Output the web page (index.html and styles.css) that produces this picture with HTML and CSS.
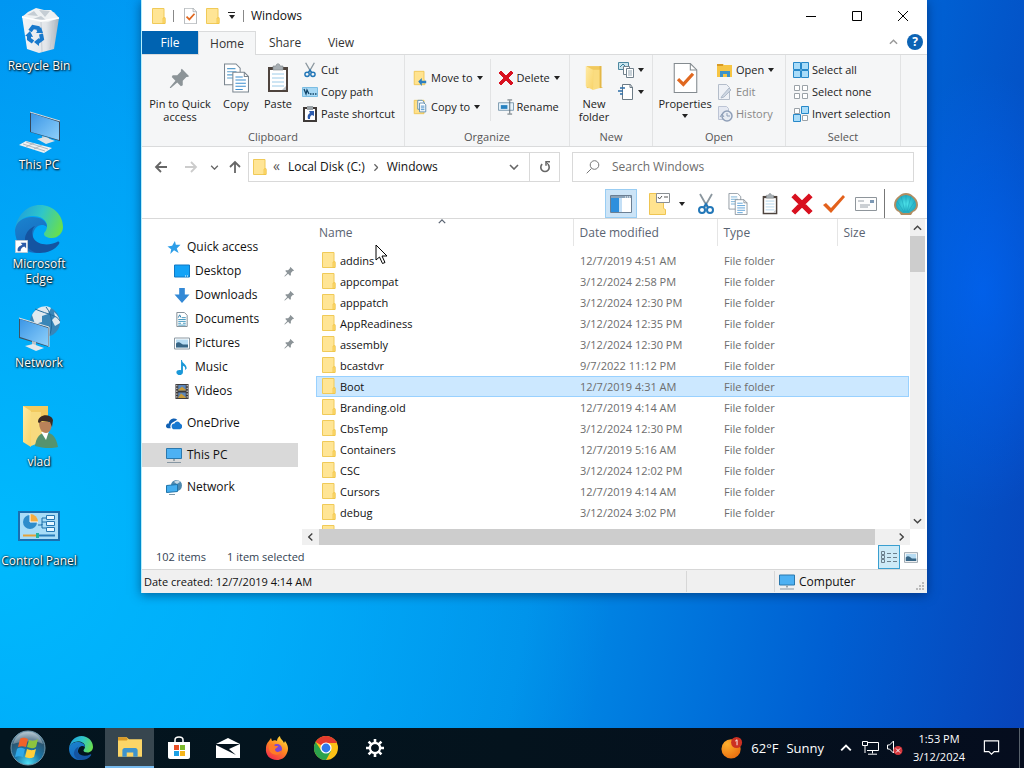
FILE: index.html
```
<!DOCTYPE html>
<html lang="en">
<head>
    <meta charset="UTF-8">
    <meta name="viewport" content="width=device-width, initial-scale=1.0">
    <title>Windows</title>
    <link rel="stylesheet" href="styles.css">
</head>
<body>
    <!-- Icon sprite -->
    <svg class="sprite" aria-hidden="true">
        <defs>
            <linearGradient id="gScreen" x1="0" y1="0" x2="1" y2="1"><stop offset="0" stop-color="#3b96e6"/><stop offset="1" stop-color="#8ed0fb"/></linearGradient>
            <linearGradient id="gFolder" x1="0" y1="0" x2="1" y2="1"><stop offset="0" stop-color="#ffeaa4"/><stop offset="1" stop-color="#f8d469"/></linearGradient>
            <linearGradient id="gBin" x1="0" y1="0" x2="1" y2="0"><stop offset="0" stop-color="#f4f6f8"/><stop offset=".65" stop-color="#e3e6ea"/><stop offset="1" stop-color="#a9b2bb"/></linearGradient>
            <linearGradient id="gEdgeTop" x1="0" y1=".3" x2="1" y2=".6"><stop offset="0" stop-color="#1f9fdc"/><stop offset=".5" stop-color="#2fc6c9"/><stop offset="1" stop-color="#69df4c"/></linearGradient>
            <linearGradient id="gEdgeBody" x1="0" y1="0" x2=".4" y2="1"><stop offset="0" stop-color="#1b84cf"/><stop offset="1" stop-color="#1668bd"/></linearGradient>
            <radialGradient id="gOrb" cx=".5" cy=".95" r=".95"><stop offset="0" stop-color="#4fe0f5"/><stop offset=".4" stop-color="#1a76a8"/><stop offset=".75" stop-color="#2b5570"/><stop offset="1" stop-color="#a5bcc8"/></radialGradient>
            <linearGradient id="gFox" x1=".8" y1="0" x2=".2" y2="1"><stop offset="0" stop-color="#ffe23e"/><stop offset=".45" stop-color="#ff8b1f"/><stop offset="1" stop-color="#f2264f"/></linearGradient>
            <radialGradient id="gSun" cx=".3" cy=".25" r=".9"><stop offset="0" stop-color="#ffb02e"/><stop offset="1" stop-color="#e8680c"/></radialGradient>
            <radialGradient id="gShell" cx=".5" cy=".5" r=".6"><stop offset="0" stop-color="#4fe6ec"/><stop offset="1" stop-color="#1a9fb8"/></radialGradient>
        </defs>

        <symbol id="i-folder" viewBox="0 0 14 16">
            <path d="M.5.500h11.500v9l1 1v5H.5z" fill="#ffe595" stroke="#f0ca58"/>
            <path d="M11 10l2-.5v6h-2z" fill="#ffdc74" stroke="#efc241" stroke-width=".7"/>
        </symbol>
        <symbol id="i-bigfolder" viewBox="0 0 24 28">
            <path d="M4 1h16v24H4z" fill="#f1c95d"/>
            <path d="M18 1h2v23l2 1h-4z" fill="#e3b748"/>
            <path d="M3 1l8 4v22l-8-4z" fill="url(#gFolder)"/>
            <path d="M11 5h7v20l-7 2z" fill="#fadc80"/>
        </symbol>
        <symbol id="i-bin" viewBox="0 0 48 48">
            <path d="M7 9l32-4 5 6-5 31-15 4-12-4z" fill="url(#gBin)"/>
            <path d="M7 10l6-5 8-4 8 2 7 0 8 8-11 4-14 0z" fill="#eef1f3"/>
            <path d="M12 8l7-4 4 5zM24 3l6 7 5-6zM18 12l8-3 5 4z" fill="#c5cdd4"/>
            <path d="M7 10l19 4 18-3" fill="none" stroke="#fff" stroke-width="1.500"/>
            <path d="M26 15l1 30M39 14l-4 28" stroke="#c5ccd3"/>
            <g fill="none" stroke="#1879cc" stroke-width="4"><path d="M15 24l3-4 5 1 1 3"/><path d="M26 27l1 5-4 3"/><path d="M18 35l-4-3 0-4"/></g>
            <path d="M21 26l7 0-2-6zM24 31l-5 4 5 4zM10 29l5-5 3 6z" fill="#1879cc"/>
        </symbol>
        <symbol id="i-pc" viewBox="0 0 48 48">
            <path d="M15 6l30 9v20l-30-9z" fill="#35475a"/>
            <path d="M16 7l28 9v18l-28-8z" fill="url(#gScreen)"/>
            <path d="M15 6l30 9" stroke="#d5dde2"/>
            <path d="M27 30l7 2v4l-7-2z" fill="#b4bec6"/>
            <path d="M22 33l8-2 10 4-9 3z" fill="#dce2e6"/>
            <path d="M4 39l7-4 26 7-8 5z" fill="#eef1f3"/>
            <path d="M8 38l22 7M11 36l22 7M11 41l8-4M19 43l8-4" stroke="#9fabb4" stroke-width=".8"/>
        </symbol>
        <symbol id="i-edge" viewBox="0 0 48 48">
            <path d="M0 25C2 10 12 0 25 0c13 0 23 10 23 22 0 6-5 11-11 11-5 0-8-2-8-4 0-2 3-3 3-8 0-6-6-10-14-10C8 11 2 17 0 25z" fill="url(#gEdgeTop)"/>
            <path d="M0 25c1-8 8-13 17-13 9 0 15 4 15 10-6-5-14 0-14 9 0 7 6 12 13 12-2 3-6 5-11 5C8 47 0 38 0 25z" fill="url(#gEdgeBody)"/>
            <path d="M20 21c-3 3-4 8-1 13 4 6 15 7 23 3 2-1 3 0 2 2-4 6-12 9-19 9-9 0-16-7-15-15 1-6 5-10 10-12z" fill="#1454a1"/>
        </symbol>
        <symbol id="i-shortcut" viewBox="0 0 14 14">
            <path d="M.5.5h13v13H.5z" fill="#fff" stroke="#bcc8d4"/>
            <path d="M6 3h6v6l-2-2c-3 1-4 3-4 5H3c-1-4 2-6 5-7z" fill="#2c5ba8"/>
        </symbol>
        <symbol id="i-net" viewBox="0 0 48 48">
            <circle cx="30" cy="18" r="15" fill="#3886b8"/>
            <path d="M17 11c4-8 14-11 19-7l-3 6-6 2 0 6-7 2zM39 8c4 3 6 7 6 11l-5 3-3-6 3-3z" fill="#dfe9ef"/>
            <path d="M31 3c7 8 7 22 3 29M20 5c14 6 22 6 25 12" fill="none" stroke="#236a9b"/>
            <path d="M4 14l30 9v20L4 34z" fill="#3c5366"/>
            <path d="M5 15l28 9v18L5 33z" fill="url(#gScreen)"/>
            <path d="M4 14l30 9v20" fill="none" stroke="#dbe5eb"/>
            <path d="M17 37l4 1v4l-4-1z" fill="#b8c3ca"/>
            <path d="M10 42l8-2 11 4-8 3z" fill="#e3e8eb"/>
        </symbol>
        <symbol id="i-user" viewBox="0 0 48 48">
            <path d="M8 3h25v34H8z" fill="#f2ca5f"/>
            <path d="M8 3l8 5v36l-8-5z" fill="url(#gFolder)"/>
            <path d="M16 9h10v30l-10 4z" fill="#f8da7e"/>
            <path d="M20 43c1-8 4-12 9-13 7-1 12 3 14 14-7 2-16 1-23-1z" fill="#55936f"/>
            <path d="M26 29l8-1-3 9z" fill="#fff"/>
            <path d="M24 19c0 7 3 11 7 11s6-5 6-11z" fill="#b98259"/>
            <path d="M23 19c0-8 13-9 15-2l-1 7-2-5-8-1-3 2z" fill="#3b2a23"/>
        </symbol>
        <symbol id="i-cpl" viewBox="0 0 48 48">
            <path d="M3 9h42v30H3z" fill="#1a6fb0"/>
            <path d="M5 11h38v26H5z" fill="#a8dcf8"/>
            <circle cx="15" cy="20" r="7" fill="#2e8ccb"/>
            <path d="M15 20v-8a8 8 0 018 8z" fill="#f6ac3f"/>
            <path d="M15 20v-8M15 20h8" stroke="#fff"/>
            <path d="M23 23h4v-7h4M31 20h-4M31 26h-4v-4" fill="none" stroke="#1f6ea8"/>
            <path d="M31.500 13.500h8v4h-8zM31.500 19.500h8v4h-8zM31.500 25.500h8v4h-8z" fill="#e9f7ff" stroke="#2577b3"/>
            <path d="M8 33.500h15" stroke="#e4a23a" stroke-width="2"/>
            <path d="M23 33.500h17" stroke="#2a7dbb" stroke-width="2"/>
            <path d="M21 31h3v5h-3z" fill="#24b1a0"/>
        </symbol>

        <symbol id="i-pin" viewBox="0 0 24 24">
            <path d="M14 2l8 8-2 1-1 0-4 4 0 5-2 1-4-4-7 6-1 0 0-1 6-7-4-4 1-2 5 0 4-4 0-2z" fill="#8c9498"/>
        </symbol>
        <symbol id="i-copy" viewBox="0 0 24 28">
            <path d="M.5.500h11l4 4v16h-15z" fill="#fff" stroke="#7b8690"/>
            <path d="M3 5h8M3 8h9M3 11h9M3 14h9" stroke="#5a9fce"/>
            <path d="M8.500 8.500h11l4 4v15h-15z" fill="#fff" stroke="#7b8690"/>
            <path d="M19.500 8.500v4h4" fill="none" stroke="#7b8690"/>
            <path d="M11 13h7M11 16h10M11 19h10M11 22h10M11 25h7" stroke="#3d8fd0"/>
        </symbol>
        <symbol id="i-paste" viewBox="0 0 22 30">
            <path d="M1 4h20v25H1z" fill="#4e443e"/>
            <path d="M3 7h16v20H3z" fill="#fff"/>
            <path d="M5 11h12M5 15h12M5 19h12M5 23h12" stroke="#9ccbe8"/>
            <path d="M6 3h3c0-3 4-3 4 0h3v4H6z" fill="#a7aeb3" stroke="#7f878c" stroke-width=".6"/>
            <path d="M15 27l4-4v4z" fill="#bfc4c8"/>
        </symbol>
        <symbol id="i-cut" viewBox="0 0 16 22">
            <path d="M2 1l8 14M14 1L6 15" stroke="#8b979f" stroke-width="1.800"/>
            <circle cx="4" cy="17" r="3" fill="none" stroke="#2277b8" stroke-width="2"/>
            <circle cx="12" cy="17" r="3" fill="none" stroke="#2277b8" stroke-width="2"/>
            <path d="M6 14l2-3 2 3" fill="none" stroke="#2277b8" stroke-width="2"/>
        </symbol>
        <symbol id="i-path" viewBox="0 0 16 10">
            <path d="M.5.500h15v9H.5z" fill="#a6d8f5" stroke="#7bbde3"/>
            <path d="M2 2l2 5 1-4 2 4" fill="none" stroke="#124468" stroke-width="1.300"/>
            <path d="M8 7h1.500M10.500 7H12M13 7h1.500" stroke="#124468" stroke-width="1.500"/>
        </symbol>
        <symbol id="i-pasteshort" viewBox="0 0 14 16">
            <path d="M1 2h12v13H1z" fill="#fff" stroke="#3f3a38" stroke-width="2"/>
            <path d="M4 0h6v4H4z" fill="#9ba3a8"/>
            <path d="M6 5h5v5l-2-1c-2 1-2 2-2 4H5c-1-3 0-5 2-6z" fill="#2d5cae"/>
        </symbol>
        <symbol id="i-moveto" viewBox="0 0 16 18">
            <path d="M1.500 1.500h11v9l1 1v5h-12z" fill="#ffe38f" stroke="#efc552"/>
            <path d="M6 13l4-4v3h5v3h-5v3z" fill="#2c7fc2"/>
        </symbol>
        <symbol id="i-copyto" viewBox="0 0 16 18">
            <path d="M1.500 1.500h11v15h-11z" fill="#ffe08a" stroke="#efc552"/>
            <path d="M5.500 1.500h5l2 2v8h-7z" fill="#fff" stroke="#5688b0"/>
            <path d="M7.500 4.500h5l2 2v8h-7z" fill="#fff" stroke="#5688b0"/>
            <path d="M9 8h4M9 10h4M9 12h4" stroke="#3a86c6"/>
        </symbol>
        <symbol id="i-x" viewBox="0 0 16 16">
            <path d="M1 3l2-2 5 5 5-5 2 2-5 5 5 5-2 2-5-5-5 5-2-2 5-5z" fill="#d8101f" stroke="#d8101f"/>
        </symbol>
        <symbol id="i-rename" viewBox="0 0 17 16">
            <path d="M.5 3.500h16v8H.5z" fill="#e4f2fb" stroke="#7c99ad"/>
            <path d="M3 6h7v4H3z" fill="#2681c0"/>
            <path d="M12.500 1v14M10 .500h5M10 15.500h5" stroke="#58646c"/>
        </symbol>
        <symbol id="i-newitem" viewBox="0 0 16 16">
            <path d="M.5.500h10v7H.5z" fill="#cbe5ee" stroke="#4d88a0"/>
            <path d="M2 5l3-3 4 4" fill="none" stroke="#38819d"/>
            <path d="M5.500 4.500h6v8h-6z" fill="#fff" stroke="#71818c"/>
            <path d="M8.500 6.500h7v9h-7z" fill="#fff" stroke="#71818c"/>
            <path d="M10 9h4M10 11h4M10 13h4" stroke="#91a4b1"/>
        </symbol>
        <symbol id="i-easy" viewBox="0 0 16 16">
            <path d="M4.500.500h8l2 3v12h-10z" fill="#fff" stroke="#6c7b86"/>
            <path d="M12 .500v3h3" fill="none" stroke="#6c7b86"/>
            <path d="M2 4h5M0 7h5M2 10h3" stroke="#2c6da8" stroke-width="1.500"/>
        </symbol>
        <symbol id="i-props" viewBox="0 0 22 28">
            <path d="M.5.500h15l6 6v21H.5z" fill="#fff" stroke="#848b90"/>
            <path d="M15.500.500v6h6" fill="none" stroke="#848b90"/>
            <path d="M4 15l5 5 9-10" fill="none" stroke="#e06820" stroke-width="3"/>
        </symbol>
        <symbol id="i-open" viewBox="0 0 16 14">
            <path d="M0 1h6l1 1h8v12H0z" fill="#f6c544"/>
            <path d="M0 1h6v2H0z" fill="#d89a25"/>
            <path d="M3 14V8h10v6h-3v-3H6v3z" fill="#3c92c8"/>
        </symbol>
        <symbol id="i-edit" viewBox="0 0 16 16">
            <path d="M1.500.500h8l3 3v12h-11z" fill="#eef1f6" stroke="#b4bdca"/>
            <path d="M5 12l7-8 2 2-7 7-3 1z" fill="#cdd6e2" stroke="#a3b0c0" stroke-width=".8"/>
        </symbol>
        <symbol id="i-history" viewBox="0 0 16 16">
            <path d="M1.500.500h8l2 2v11h-10z" fill="#e5e9f2" stroke="#bcc4d5"/>
            <circle cx="10" cy="10" r="5" fill="#e8ecf3" stroke="#8f9fb8" stroke-width="1.500"/>
            <path d="M10 7v3h3M3 11l2-3 2 3" fill="none" stroke="#8f9fb8"/>
        </symbol>
        <symbol id="i-selall" viewBox="0 0 16 16">
            <path d="M.5.500h7v7h-7zM8.500.500h7v7h-7zM.5 8.500h7v7h-7zM8.500 8.500h7v7h-7z" fill="#a9dcf9" stroke="#2788c9"/>
        </symbol>
        <symbol id="i-selnone" viewBox="0 0 16 16">
            <path d="M1.500 1.500h5v5h-5zM9.500 1.500h5v5h-5zM1.500 9.500h5v5h-5zM9.500 9.500h5v5h-5z" fill="#fff" stroke="#9ba2a8"/>
        </symbol>
        <symbol id="i-selinv" viewBox="0 0 16 16">
            <path d="M1.500 2.500h5v5h-5zM9.500 9.500h5v5h-5z" fill="#fff" stroke="#9ba2a8"/>
            <path d="M8.500.500h7v7h-7zM.5 8.500h7v7h-7z" fill="#a9dcf9" stroke="#2788c9"/>
        </symbol>

        <symbol id="i-arrow" viewBox="0 0 14 12">
            <path d="M13 6H2M7 1L2 6l5 5" fill="none" stroke="currentColor" stroke-width="1.800"/>
        </symbol>
        <symbol id="i-arrowup" viewBox="0 0 12 14">
            <path d="M6 13V2M1 7l5-5 5 5" fill="none" stroke="currentColor" stroke-width="1.800"/>
        </symbol>
        <symbol id="i-chev" viewBox="0 0 10 6">
            <path d="M1 1l4 4 4-4" fill="none" stroke="currentColor" stroke-width="1.600"/>
        </symbol>
        <symbol id="i-refresh" viewBox="0 0 12 12">
            <path d="M3.200 3.200a4.200 4.200 0 105.600 0" fill="none" stroke="currentColor" stroke-width="1.600"/>
            <path d="M11 .8H7v4" fill="none" stroke="currentColor" stroke-width="1.500"/>
            <path d="M7 1l3 3" stroke="currentColor"/>
        </symbol>
        <symbol id="i-search" viewBox="0 0 14 14">
            <circle cx="8.500" cy="5" r="4.300" fill="none" stroke="currentColor"/>
            <path d="M5.500 8.500L.7 13.300" stroke="currentColor"/>
        </symbol>

        <symbol id="i-pane" viewBox="0 0 22 18">
            <path d="M.5.500h21v17H.5z" fill="#fff" stroke="#6c7f93"/>
            <path d="M1 1h20v2H1z" fill="#8aa2b8"/>
            <path d="M1 3h8v14H1z" fill="#2e8fdd"/>
            <path d="M9 3h3v14H9z" fill="#c3dff6"/>
            <path d="M15 2h1M17 2h1M19 2h1" stroke="#fff"/>
        </symbol>
        <symbol id="i-folderview" viewBox="0 0 22 22">
            <path d="M1.500.500h14v15l2 1v5h-16z" fill="#ffe38f" stroke="#efc552"/>
            <path d="M8.500.500h13v9h-13z" fill="#fff" stroke="#8a8f93"/>
            <path d="M10 4l1.500 2L14 3M16 4h4" fill="none" stroke="#555"/>
        </symbol>
        <symbol id="i-check" viewBox="0 0 22 18">
            <path d="M0 10l3-2 5 5L20 0l2 2L8 18z" fill="#e3611c"/>
        </symbol>
        <symbol id="i-mail2" viewBox="0 0 22 14">
            <path d="M.5.500h21v13H.5z" fill="#fdfdfd" stroke="#8e959b"/>
            <path d="M15 3h4v3h-4z" fill="#7d99b5"/>
            <path d="M3 4h6M5 8h10M5 10h8" stroke="#9aa2aa"/>
        </symbol>
        <symbol id="i-shell" viewBox="0 0 24 22">
            <path d="M12 0c3 0 5 1 7 3 3 2 5 5 5 9 0 3-2 6-5 7l-2 3H7l-2-3c-3-1-5-4-5-7 0-4 2-7 5-9 2-2 4-3 7-3z" fill="#b08d62"/>
            <path d="M12 2c4 0 10 4 10 10 0 3-2 5-4 6l-3 2H9l-3-2c-2-1-4-3-4-6C2 6 8 2 12 2z" fill="url(#gShell)"/>
            <path d="M12 19V2M11 19L7 3M13 19l4-16M10 19L3 8M14 19l7-11" stroke="#1b9db4" stroke-width=".5"/>
        </symbol>

        <symbol id="i-star" viewBox="0 0 14 14">
            <path d="M8 0l1 4 5 0-4 4 2 5-5-3-4 4 1-5-4-3 5-1z" fill="#2d9ee8"/>
        </symbol>
        <symbol id="i-desktop" viewBox="0 0 16 14">
            <path d="M.5.500h15v12H.5z" fill="#14a3f7" stroke="#1079c4"/>
            <path d="M11 11.500h1M13 11.500h1" stroke="#fff"/>
        </symbol>
        <symbol id="i-down" viewBox="0 0 16 16">
            <path d="M5 0h6v7h5l-8 9-8-9h5z" fill="#3389d6"/>
        </symbol>
        <symbol id="i-doc" viewBox="0 0 12 16">
            <path d="M.5.500h8l3 3v12H.5z" fill="#fff" stroke="#7d8992"/>
            <path d="M2 8h8M2 10h8M2 12h3M7 12h3M2 14h8M6 6h4" stroke="#3f94bd"/>
            <path d="M2 6l1.500-3L5 6" fill="none" stroke="#2c79a8"/>
        </symbol>
        <symbol id="i-pics" viewBox="0 0 16 12">
            <path d="M.5.500h15v11H.5z" fill="#fff" stroke="#8b98a2"/>
            <path d="M2 2h12v8H2z" fill="#b7dcf3"/>
            <path d="M2 6c3-3 5 0 7 1l5 0v3H2z" fill="#386686"/>
        </symbol>
        <symbol id="i-music" viewBox="0 0 12 16">
            <path d="M6 0c0 4 5 4 5 9l-2 2c1-3 0-4-2-5v7c0 4-7 4-7 0 0-2 3-3 5-2V0z" fill="#1a98d8"/>
        </symbol>
        <symbol id="i-video" viewBox="0 0 14 16">
            <path d="M0 0h14v16H0z" fill="#3d3a3a"/>
            <path d="M3 1h8v6H3zM3 9h8v6H3z" fill="#5c86b9"/>
            <path d="M3 6l4-3 4 3v1H3zM3 14l3-4 5 4v1H3z" fill="#c99b38"/>
            <path d="M1.500 1v15M12.500 1v15" stroke="#fff" stroke-dasharray="1.500 1.500"/>
        </symbol>
        <symbol id="i-onedrive" viewBox="0 0 17 12">
            <path d="M0 9c0-3 2-3 3-3 0-4 5-7 9-4L7 5c-2 1-3 4-2 6H2c-1 0-2-1-2-2z" fill="#1161b4"/>
            <path d="M6 9c0-2 1-3 3-3 1-3 5-3 6 0 3 1 3 5 0 6H8c-1 0-2-1-2-3z" fill="#1878d0"/>
        </symbol>
        <symbol id="i-monitor" viewBox="0 0 16 15">
            <path d="M.5.500h15v10H.5z" fill="#4db1f3" stroke="#2b78ad"/>
            <path d="M7 11h2v2H7z" fill="#98a4ac"/>
            <path d="M1 14.500h14" stroke="#8797a3"/>
        </symbol>
        <symbol id="i-smallnet" viewBox="0 0 16 15">
            <circle cx="10.500" cy="5.500" r="5.500" fill="#4d88ae"/>
            <path d="M8 2c2-2 5-2 6 0l-3 2z" fill="#c7dae6"/>
            <path d="M.5 5.500l11-1v7l-11 1z" fill="#43aef0" stroke="#1e74aa"/>
            <path d="M3 14.500h6" stroke="#7d98aa"/>
        </symbol>

        <symbol id="i-orb" viewBox="0 0 36 36">
            <circle cx="18" cy="18" r="17" fill="url(#gOrb)" stroke="#6f98ad"/>
            <path d="M3 14C6 5 12 2 18 2s12 3 15 12c-8-4-20-3-30 0z" fill="#fff" opacity=".3"/>
            <path d="M10 9c3-2 5-1 8 0l-2 8c-3-1-5-1-8 0z" fill="#f0622a"/>
            <path d="M19 10c3 1 6 1 9-1l-2 8c-3 2-6 1-9 0z" fill="#8cc43f"/>
            <path d="M7 19c3-2 5-1 8 0l-2 8c-3-1-5-1-8 0z" fill="#2fa8e8"/>
            <path d="M17 19c3 1 5 2 9 0l-2 8c-4 2-6 1-9 0z" fill="#ffcf3b"/>
        </symbol>
        <symbol id="i-explorer" viewBox="0 0 22 18">
            <path d="M0 0h8l2 2h12v16H0z" fill="#fbd567"/>
            <path d="M0 0h8l1 2-1 1H0z" fill="#d99a27"/>
            <path d="M4 18v-6c0-1 1-2 2-2h10c1 0 2 1 2 2v6h-4v-4H8v4z" fill="#3d93cd"/>
        </symbol>
        <symbol id="i-store" viewBox="0 0 24 24">
            <path d="M8 7V4c0-4 8-4 8 0v3" fill="none" stroke="#fff" stroke-width="1.500"/>
            <path d="M1 6h22v15c0 1-1 2-2 2H3c-1 0-2-1-2-2z" fill="#fff"/>
            <path d="M7 9h5v5H7z" fill="#e94f26"/><path d="M13 9h5v5h-5z" fill="#7cb92c"/>
            <path d="M7 15h5v5H7z" fill="#1ba0e4"/><path d="M13 15h5v5h-5z" fill="#f6b51a"/>
        </symbol>
        <symbol id="i-mail" viewBox="0 0 24 20">
            <path d="M0 6l12-6 12 6v14H0z" fill="#fff"/>
            <path d="M0 6h24l-11 5 7 6L0 7z" fill="#04131d"/>
        </symbol>
        <symbol id="i-firefox" viewBox="0 0 24 24">
            <path d="M4 5l2-3 1 3c2-1 4-1 5 0 0-2 1-4 3-5 0 3 3 4 4 7l1-2c3 4 4 8 2 12-2 5-6 7-10 7C5 24 0 19 1 12c0-3 1-5 3-7z" fill="url(#gFox)"/>
            <circle cx="12" cy="13" r="5" fill="#7c46d4"/>
            <path d="M4 9c2-2 5-1 6 1l3 0c0 2-3 2-3 4 1 3 5 2 7 0-1 4-5 6-9 4-3-1-5-5-4-9z" fill="#ff7b26"/>
        </symbol>
        <symbol id="i-chrome" viewBox="0 0 24 24">
            <circle cx="12" cy="12" r="12" fill="#fbc116"/>
            <path d="M12 12L1.600 6A12 12 0 0122.400 6L12 7z" fill="#e33b2e"/>
            <path d="M1.600 6A12 12 0 0012 24l5-9-5-3-5 2z" fill="#2ba24c"/>
            <path d="M12 6h10.400" stroke="#e33b2e" stroke-width="2"/>
            <circle cx="12" cy="12" r="5.600" fill="#fff"/><circle cx="12" cy="12" r="4.400" fill="#2f79ea"/>
        </symbol>
        <symbol id="i-gear" viewBox="0 0 18 18">
            <circle cx="9" cy="9" r="5" fill="none" stroke="#fff" stroke-width="2.400"/>
            <path d="M9 0v4M9 14v4M0 9h4M14 9h4M2.600 2.600l3 3M12.400 12.400l3 3M15.400 2.600l-3 3M5.600 12.400l-3 3" stroke="#fff" stroke-width="2.600"/>
            <circle cx="9" cy="9" r="3.600" fill="#04131d"/>
        </symbol>
        <symbol id="i-sun" viewBox="0 0 24 24">
            <circle cx="11" cy="13" r="10.500" fill="url(#gSun)"/>
            <circle cx="17" cy="6" r="6" fill="#cb3123"/>
            <path d="M15.500 4.500L17.500 3v6" fill="none" stroke="#fff"/>
        </symbol>
        <symbol id="i-lan" viewBox="0 0 17 14">
            <path d="M5 1.500h11.500v8H5M10.500 9.500v3M6 13.200h9M.5.500h5v4h-5zM3 5v7" fill="none" stroke="#fff"/>
        </symbol>
        <symbol id="i-vol" viewBox="0 0 16 16">
            <path d="M1 5h2l4-4v12L3 9H1z" fill="none" stroke="#fff"/>
            <circle cx="11.500" cy="10.500" r="4.500" fill="#d5363c"/>
            <path d="M9.500 8.500l4 4M13.500 8.500l-4 4" stroke="#fff"/>
        </symbol>
        <symbol id="i-note" viewBox="0 0 18 18">
            <path d="M1 1h16v12h-5l-3 3-3-3H1z" fill="none" stroke="#fff" stroke-width="1.300"/>
        </symbol>
    </svg>

    <main class="desktop">
        <nav class="shortcuts" aria-label="Desktop">
            <a href="#"><svg><use href="#i-bin"/></svg>Recycle Bin</a>
            <a href="#"><svg><use href="#i-pc"/></svg>This PC</a>
            <a href="#" class="has-badge"><svg><use href="#i-edge"/></svg>Microsoft<br>Edge<svg class="badge"><use href="#i-shortcut"/></svg></a>
            <a href="#"><svg><use href="#i-net"/></svg>Network</a>
            <a href="#"><svg><use href="#i-user"/></svg>vlad</a>
            <a href="#"><svg><use href="#i-cpl"/></svg>Control Panel</a>
        </nav>

        <section class="window">
            <header class="titlebar">
                <svg class="ic-folder"><use href="#i-folder"/></svg>
                <span class="bar"></span>
                <svg class="ic-props"><use href="#i-props"/></svg>
                <svg class="ic-folder"><use href="#i-folder"/></svg>
                <button class="qat" aria-label="Customize"><span class="caret"></span></button>
                <span class="bar"></span>
                <h1>Windows</h1>
                <div class="winbtns">
                    <button aria-label="Minimize"><svg viewBox="0 0 10 10"><path d="M0 5.500h10"/></svg></button>
                    <button aria-label="Maximize"><svg viewBox="0 0 10 10"><path d="M.5.500h9v9h-9z"/></svg></button>
                    <button aria-label="Close"><svg viewBox="0 0 10 10"><path d="M0 0l10 10M10 0L0 10"/></svg></button>
                </div>
            </header>

            <div class="tabs">
                <button class="tab file">File</button>
                <button class="tab active">Home</button>
                <button class="tab">Share</button>
                <button class="tab">View</button>
                <button class="collapse" aria-label="Collapse ribbon"><svg><use href="#i-chev"/></svg></button>
                <button class="help" aria-label="Help">?</button>
            </div>

            <div class="ribbon">
                <div class="group clipboard">
                    <div class="tools">
                        <button class="big wide"><svg class="ic-pin"><use href="#i-pin"/></svg>Pin to Quick<br>access</button>
                        <button class="big"><svg class="ic-copy"><use href="#i-copy"/></svg>Copy</button>
                        <button class="big"><svg class="ic-paste"><use href="#i-paste"/></svg>Paste</button>
                        <div class="stack">
                            <button><svg><use href="#i-cut"/></svg>Cut</button>
                            <button><svg><use href="#i-path"/></svg>Copy path</button>
                            <button><svg><use href="#i-pasteshort"/></svg>Paste shortcut</button>
                        </div>
                    </div>
                    <div class="label">Clipboard</div>
                </div>
                <div class="group organize">
                    <div class="tools">
                        <div class="stack two">
                            <button><svg><use href="#i-moveto"/></svg>Move to<span class="caret"></span></button>
                            <button><svg><use href="#i-copyto"/></svg>Copy to<span class="caret"></span></button>
                        </div>
                        <div class="stack two split">
                            <button><svg><use href="#i-x"/></svg>Delete<span class="caret"></span></button>
                            <button><svg><use href="#i-rename"/></svg>Rename</button>
                        </div>
                    </div>
                    <div class="label">Organize</div>
                </div>
                <div class="group new">
                    <div class="tools">
                        <button class="big"><svg class="ic-new"><use href="#i-bigfolder"/></svg>New<br>folder</button>
                        <div class="stack">
                            <button aria-label="New item"><svg><use href="#i-newitem"/></svg><span class="caret"></span></button>
                            <button aria-label="Easy access"><svg><use href="#i-easy"/></svg><span class="caret"></span></button>
                        </div>
                    </div>
                    <div class="label">New</div>
                </div>
                <div class="group open">
                    <div class="tools">
                        <button class="big"><svg class="ic-copy"><use href="#i-props"/></svg>Properties<span class="caret"></span></button>
                        <div class="stack">
                            <button><svg><use href="#i-open"/></svg>Open<span class="caret"></span></button>
                            <button disabled><svg><use href="#i-edit"/></svg>Edit</button>
                            <button disabled><svg><use href="#i-history"/></svg>History</button>
                        </div>
                    </div>
                    <div class="label">Open</div>
                </div>
                <div class="group select">
                    <div class="tools">
                        <div class="stack">
                            <button><svg><use href="#i-selall"/></svg>Select all</button>
                            <button><svg><use href="#i-selnone"/></svg>Select none</button>
                            <button><svg><use href="#i-selinv"/></svg>Invert selection</button>
                        </div>
                    </div>
                    <div class="label">Select</div>
                </div>
            </div>

            <div class="navbar">
                <div class="arrows">
                    <button aria-label="Back"><svg><use href="#i-arrow"/></svg></button>
                    <button class="forward" aria-label="Forward" disabled><svg><use href="#i-arrow"/></svg></button>
                    <button class="recent" aria-label="Recent"><svg><use href="#i-chev"/></svg></button>
                    <button class="up" aria-label="Up"><svg><use href="#i-arrowup"/></svg></button>
                </div>
                <div class="address">
                    <svg class="ic-folder"><use href="#i-folder"/></svg>
                    <span class="more">«</span>
                    <a href="#">Local Disk (C:)</a>
                    <svg class="sep"><use href="#i-chev"/></svg>
                    <a href="#">Windows</a>
                    <button class="drop" aria-label="Previous locations"><svg><use href="#i-chev"/></svg></button>
                    <button class="refresh" aria-label="Refresh"><svg><use href="#i-refresh"/></svg></button>
                </div>
                <label class="search">
                    <svg><use href="#i-search"/></svg>
                    <input type="text" placeholder="Search Windows" aria-label="Search Windows">
                </label>
            </div>

            <div class="toolbar">
                <button class="on" aria-label="Navigation pane"><svg><use href="#i-pane"/></svg></button>
                <button aria-label="Layout"><svg><use href="#i-folderview"/></svg></button>
                <button class="narrow" aria-label="Layout options"><span class="caret"></span></button>
                <button aria-label="Cut"><svg><use href="#i-cut"/></svg></button>
                <button aria-label="Copy"><svg><use href="#i-copy"/></svg></button>
                <button aria-label="Paste"><svg><use href="#i-paste"/></svg></button>
                <button aria-label="Delete"><svg><use href="#i-x"/></svg></button>
                <button aria-label="Properties"><svg><use href="#i-check"/></svg></button>
                <button aria-label="E-mail"><svg><use href="#i-mail2"/></svg></button>
                <button class="shell" aria-label="Classic Shell"><svg><use href="#i-shell"/></svg></button>
            </div>

            <div class="content">
                <nav class="sidebar">
                    <a href="#"><svg class="star"><use href="#i-star"/></svg>Quick access</a>
                    <a href="#" class="sub"><svg><use href="#i-desktop"/></svg>Desktop<svg class="pin"><use href="#i-pin"/></svg></a>
                    <a href="#" class="sub"><svg><use href="#i-down"/></svg>Downloads<svg class="pin"><use href="#i-pin"/></svg></a>
                    <a href="#" class="sub"><svg><use href="#i-doc"/></svg>Documents<svg class="pin"><use href="#i-pin"/></svg></a>
                    <a href="#" class="sub"><svg><use href="#i-pics"/></svg>Pictures<svg class="pin"><use href="#i-pin"/></svg></a>
                    <a href="#" class="sub"><svg><use href="#i-music"/></svg>Music</a>
                    <a href="#" class="sub"><svg><use href="#i-video"/></svg>Videos</a>
                    <a href="#" class="root"><svg><use href="#i-onedrive"/></svg>OneDrive</a>
                    <a href="#" class="root current"><svg><use href="#i-monitor"/></svg>This PC</a>
                    <a href="#" class="root"><svg><use href="#i-smallnet"/></svg>Network</a>
                </nav>

                <div class="files">
                    <div class="list">
                        <table>
                            <thead>
                                <tr>
                                    <th class="c-name">Name<svg class="sort"><use href="#i-chev"/></svg></th>
                                    <th class="c-date">Date modified</th>
                                    <th class="c-type">Type</th>
                                    <th>Size</th>
                                </tr>
                            </thead>
                            <tbody>
                                <tr><td><svg><use href="#i-folder"/></svg>addins</td><td>12/7/2019 4:51 AM</td><td>File folder</td><td></td></tr>
                                <tr><td><svg><use href="#i-folder"/></svg>appcompat</td><td>3/12/2024 2:58 PM</td><td>File folder</td><td></td></tr>
                                <tr><td><svg><use href="#i-folder"/></svg>apppatch</td><td>3/12/2024 12:30 PM</td><td>File folder</td><td></td></tr>
                                <tr><td><svg><use href="#i-folder"/></svg>AppReadiness</td><td>3/12/2024 12:35 PM</td><td>File folder</td><td></td></tr>
                                <tr><td><svg><use href="#i-folder"/></svg>assembly</td><td>3/12/2024 12:30 PM</td><td>File folder</td><td></td></tr>
                                <tr><td><svg><use href="#i-folder"/></svg>bcastdvr</td><td>9/7/2022 11:12 PM</td><td>File folder</td><td></td></tr>
                                <tr class="selected"><td><svg><use href="#i-folder"/></svg>Boot</td><td>12/7/2019 4:31 AM</td><td>File folder</td><td></td></tr>
                                <tr><td><svg><use href="#i-folder"/></svg>Branding.old</td><td>12/7/2019 4:14 AM</td><td>File folder</td><td></td></tr>
                                <tr><td><svg><use href="#i-folder"/></svg>CbsTemp</td><td>3/12/2024 12:30 PM</td><td>File folder</td><td></td></tr>
                                <tr><td><svg><use href="#i-folder"/></svg>Containers</td><td>12/7/2019 5:16 AM</td><td>File folder</td><td></td></tr>
                                <tr><td><svg><use href="#i-folder"/></svg>CSC</td><td>3/12/2024 12:02 PM</td><td>File folder</td><td></td></tr>
                                <tr><td><svg><use href="#i-folder"/></svg>Cursors</td><td>12/7/2019 4:14 AM</td><td>File folder</td><td></td></tr>
                                <tr><td><svg><use href="#i-folder"/></svg>debug</td><td>3/12/2024 3:02 PM</td><td>File folder</td><td></td></tr>
                                <tr><td><svg><use href="#i-folder"/></svg></td><td></td><td></td><td></td></tr>
                            </tbody>
                        </table>
                    </div>
                    <div class="vscroll">
                        <button class="flip" aria-label="Scroll up"><svg><use href="#i-chev"/></svg></button>
                        <div class="thumb"></div>
                        <button aria-label="Scroll down"><svg><use href="#i-chev"/></svg></button>
                    </div>
                    <div class="hscroll">
                        <button class="left" aria-label="Scroll left"><svg><use href="#i-chev"/></svg></button>
                        <div class="thumb"></div>
                        <button class="right" aria-label="Scroll right"><svg><use href="#i-chev"/></svg></button>
                    </div>
                </div>
            </div>

            <div class="status">
                <span>102 items</span>
                <span>1 item selected</span>
                <div class="views">
                    <button class="on" aria-label="Details">
                        <svg viewBox="0 0 18 14"><path d="M1.500 1.500h3v3h-3zM1.500 5.500h3v3h-3zM1.500 9.500h3v3h-3z"/><path d="M7 3.500h4M13 3.500h4M7 7.500h4M13 7.500h4M7 11.500h4M13 11.500h4"/></svg>
                    </button>
                    <button aria-label="Large icons"><svg class="ic-pics"><use href="#i-pics"/></svg></button>
                </div>
            </div>

            <footer class="classic">
                <span class="created">Date created: 12/7/2019 4:14 AM</span>
                <span class="blank"></span>
                <span class="zone"><svg class="ic-monitor"><use href="#i-monitor"/></svg>Computer</span>
                <svg class="grip" viewBox="0 0 9 9"><path d="M6 0h2v2H6zM3 3h2v2H3zM6 3h2v2H6zM0 6h2v2H0zM3 6h2v2H3zM6 6h2v2H6z"/></svg>
            </footer>
        </section>

        <svg class="cursor" viewBox="0 0 13 21"><path d="M1 1v15l3.500-3 3 6.500 2.500-1-3-6.500H12z"/></svg>
    </main>

    <footer class="taskbar">
        <button class="start" aria-label="Start"><svg><use href="#i-orb"/></svg></button>
        <button aria-label="Edge"><svg><use href="#i-edge"/></svg></button>
        <button class="running" aria-label="File Explorer"><svg><use href="#i-explorer"/></svg></button>
        <button aria-label="Store"><svg><use href="#i-store"/></svg></button>
        <button aria-label="Mail"><svg><use href="#i-mail"/></svg></button>
        <button aria-label="Firefox"><svg><use href="#i-firefox"/></svg></button>
        <button aria-label="Chrome"><svg><use href="#i-chrome"/></svg></button>
        <button class="settings" aria-label="Settings"><svg><use href="#i-gear"/></svg></button>
        <div class="tray">
            <button class="weather"><svg><use href="#i-sun"/></svg><span>62°F</span><span>Sunny</span></button>
            <button class="hidden-icons" aria-label="Hidden icons"><svg><use href="#i-chev"/></svg></button>
            <button aria-label="Network status"><svg><use href="#i-lan"/></svg></button>
            <button aria-label="Volume"><svg><use href="#i-vol"/></svg></button>
            <button class="clock">1:53 PM<br>3/12/2024</button>
            <button class="notes" aria-label="Notifications"><svg><use href="#i-note"/></svg></button>
        </div>
    </footer>
</body>
</html>
```
FILE: styles.css
```
* {
    box-sizing: border-box;
}

body {
    margin: 0;
    height: 100vh;
    display: flex;
    flex-direction: column;
    overflow: hidden;
    font-family: "Open Sans", "Noto Sans", sans-serif;
    font-size: 12px;
    line-height: 14px;
    color: #111;
}

button {
    margin: 0;
    padding: 0;
    border: 0;
    background: none;
    font: inherit;
    color: inherit;
    display: flex;
    align-items: center;
    justify-content: center;
}

a {
    color: inherit;
    text-decoration: none;
}

svg {
    flex: none;
}

.sprite {
    position: absolute;
    width: 0;
    height: 0;
}

.caret {
    border: 3px solid transparent;
    border-top: 4px solid #222;
    border-bottom: 0;
}

/* Desktop */
.desktop {
    position: relative;
    flex: 1;
    min-height: 0;
    background:
        radial-gradient(ellipse 110px 220px at 96% 40%, rgba(0, 104, 255, 0.6), rgba(0, 104, 255, 0)),
        radial-gradient(ellipse 60% 90% at 0 75%, rgba(0, 190, 255, 0.9), rgba(0, 190, 255, 0)),
        linear-gradient(100deg, #008ff0 0%, #009cf4 30%, #008ee8 55%, #005fd2 82%, #0744ba 100%);
}

.shortcuts {
    display: grid;
    grid-auto-rows: 99px;
    width: 78px;
}

.shortcuts a {
    display: block;
    padding-top: 7px;
    text-align: center;
    line-height: 15px;
    white-space: nowrap;
    color: #fff;
    text-shadow: 1px 1px 2px #000, 0 0 2px #000;
}

.shortcuts svg {
    display: block;
    width: 48px;
    height: 48px;
    margin: 0 auto 3px;
}

.has-badge {
    position: relative;
}

.shortcuts .badge {
    position: absolute;
    left: 15px;
    top: 42px;
    width: 13px;
    height: 13px;
}

.cursor {
    position: absolute;
    left: 375px;
    top: 244px;
    width: 13px;
    height: 21px;
    fill: #fff;
    stroke: #000;
}

/* Explorer window */
.window {
    position: absolute;
    inset: 0 97px 135px 141px;
    display: flex;
    flex-direction: column;
    background: #fff;
    border-left: 1px solid #b5eefc;
    box-shadow: 0 2px 10px rgba(0, 20, 60, 0.5);
}

.titlebar {
    display: flex;
    align-items: center;
    height: 31px;
    padding-left: 10px;
}

.titlebar h1 {
    margin: 0 0 0 7px;
    font-size: 12px;
    font-weight: normal;
}

.ic-folder {
    width: 14px;
    height: 16px;
}

.ic-props {
    width: 13px;
    height: 16px;
    margin-right: 9px;
}

.bar {
    width: 1px;
    height: 12px;
    margin: 0 10px 0 7px;
    background: #888;
}

.qat {
    width: 7px;
    margin-left: 8px;
    padding-top: 2px;
    border-top: 1px solid #222;
}

.qat + .bar {
    margin: 0 0 0 8px;
}

.winbtns {
    display: flex;
    align-self: stretch;
    margin-left: auto;
    margin-right: 1px;
}

.winbtns button {
    width: 46px;
}

.winbtns svg {
    width: 10px;
    height: 10px;
    overflow: visible;
    fill: none;
    stroke: #000;
}

/* Tabs */
.tabs {
    display: flex;
    height: 24px;
    border-bottom: 1px solid #dadbdc;
}

.tab {
    width: 58px;
    color: #333;
}

.tab.file {
    width: 56px;
    height: 23px;
    background: #0063b1;
    color: #fff;
}

.tab.active {
    height: 24px;
    border: 1px solid #dadbdc;
    border-bottom: 0;
    background: #f5f6f7;
}

.tab:nth-child(4) {
    width: 54px;
}

.collapse {
    margin-left: auto;
    color: #999;
    transform: rotate(180deg);
}

.collapse svg {
    width: 9px;
    height: 6px;
}

.help {
    width: 16px;
    height: 16px;
    margin: 3px 4px 0 9px;
    border-radius: 50%;
    background: #0c63b4;
    color: #fff;
    font-weight: bold;
}

/* Ribbon */
.ribbon {
    display: flex;
    height: 92px;
    background: #f5f6f7;
    border-bottom: 1px solid #dadbdc;
    font-size: 11px;
    color: #222;
}

.group {
    display: flex;
    flex-direction: column;
    justify-content: space-between;
    border-right: 1px solid #e2e3e4;
    padding: 4px 0 2px;
    white-space: nowrap;
}

.tools {
    display: flex;
}

.label {
    text-align: center;
    color: #555;
}

.clipboard { width: 263px; }
.organize { width: 165px; }
.new { width: 83px; }
.open { width: 133px; }
.select { width: 115px; }

.big {
    flex-direction: column;
    justify-content: flex-start;
    width: 42px;
    line-height: 13px;
}

.big svg {
    margin: 4px 0;
    height: 30px;
}

.big .caret {
    margin-top: 4px;
}

.big.wide {
    width: 70px;
    margin-left: 3px;
}

.ic-pin { width: 22px; }
.ic-copy { width: 25px; }
.ic-paste { width: 22px; }
.ic-new { width: 22px; }

.stack button {
    height: 22px;
    gap: 3px;
}

.stack svg {
    width: 16px;
    height: 16px;
}

.stack .caret {
    margin-left: 1px;
}

.stack.two {
    padding: 4px 0 0 7px;
}

.stack.two button {
    height: 29px;
}

.stack.split {
    margin-left: 7px;
    border-left: 1px solid #e2e3e4;
}

.clipboard .stack {
    padding-left: 3px;
}

.new .big {
    width: 48px;
}

.open .big {
    width: 64px;
}

.select .stack {
    padding-left: 7px;
}

.stack button:disabled {
    color: #888;
}

/* Address row */
.navbar {
    display: grid;
    grid-template-columns: 95px 312fr 354fr;
    align-items: center;
    height: 40px;
    padding: 0 13px 0 11px;
}

.arrows {
    display: flex;
    align-items: center;
    padding-left: 1px;
    color: #666;
}

.arrows button {
    margin-right: 16px;
}

.arrows svg {
    width: 14px;
    height: 12px;
}

.arrows .forward {
    margin-right: 12px;
    color: #ccc;
    transform: scaleX(-1);
}

.arrows .recent {
    margin-right: 9px;
}

.arrows .recent svg {
    width: 9px;
    height: 5px;
}

.arrows .up {
    margin: 0;
}

.arrows .up svg {
    height: 14px;
}

.address,
.search {
    display: flex;
    align-items: center;
    height: 30px;
    border: 1px solid #d9d9d9;
}

.address {
    padding-left: 4px;
}

.address .more {
    margin: 0 8px 2px 6px;
    font-size: 14px;
    color: #555;
}

.address .sep {
    width: 8px;
    height: 5px;
    margin: 0 7px;
    color: #666;
    transform: rotate(-90deg);
}

.address button {
    width: 30px;
    height: 28px;
    color: #666;
}

.address .drop {
    margin-left: auto;
}

.address .drop svg {
    width: 10px;
    height: 6px;
}

.address .refresh {
    border-left: 1px solid #d9d9d9;
}

.address .refresh svg {
    width: 12px;
    height: 12px;
}

.search {
    margin-left: 12px;
    padding-left: 13px;
    color: #777;
}

.search svg {
    width: 14px;
    height: 14px;
}

.search input {
    flex: 1;
    min-width: 0;
    margin-left: 12px;
    padding: 0;
    border: 0;
    outline: 0;
    background: none;
    font: inherit;
}

.search input::placeholder {
    color: #6d6d6d;
    opacity: 1;
}

/* Classic toolbar */
.toolbar {
    display: flex;
    justify-content: flex-end;
    align-items: flex-end;
    height: 32px;
    padding-right: 5px;
    border-bottom: 1px solid #d9d9d9;
}

.toolbar button {
    width: 32px;
    height: 29px;
}

.toolbar .on {
    margin-right: 6px;
    background: #cce4f7;
    border: 1px solid #99cdf3;
}

.toolbar .narrow {
    width: 14px;
}

.toolbar .narrow + button {
    margin-left: 1px;
}

.toolbar svg {
    width: 22px;
    height: 22px;
}

.toolbar .shell {
    margin-left: 2px;
    padding-left: 9px;
    border-left: 1px solid #777;
    width: 38px;
    justify-content: flex-start;
}

.toolbar .shell svg {
    width: 24px;
}

/* Body of the window */
.content {
    display: flex;
    flex: 1;
    min-height: 0;
}

.sidebar {
    width: 156px;
    padding-top: 16px;
}

.sidebar a {
    display: flex;
    align-items: center;
    height: 24px;
    padding-left: 24px;
    gap: 5px;
}

.sidebar svg {
    width: 16px;
    height: 15px;
}

.sidebar .star {
    height: 13px;
}

.sidebar a.sub {
    padding-left: 32px;
}

.sidebar a.root {
    margin-top: 8px;
}

.sidebar .pin {
    width: 11px;
    height: 11px;
    margin-left: auto;
    margin-right: 3px;
}

.sidebar a.current {
    background: #d9d9d9;
}

.files {
    flex: 1;
    min-width: 0;
    display: grid;
    grid-template-columns: 1fr 15px;
    grid-template-rows: 1fr 16px;
    padding: 0 2px 0 4px;
}

.list {
    min-height: 0;
    padding: 0 1px 0 14px;
    overflow: hidden;
}

table {
    width: 100%;
    table-layout: fixed;
    border-collapse: collapse;
    font-size: 11px;
}

th {
    position: relative;
    height: 27px;
    padding: 0 0 0 6px;
    border-right: 1px solid #e5e5e5;
    font-size: 12px;
    font-weight: normal;
    text-align: left;
    color: #5a6472;
}

th:last-child {
    border-right: 0;
}

.c-name {
    width: 257px;
    padding-left: 3px;
}

.c-date { width: 144px; }
.c-type { width: 120px; }

.sort {
    position: absolute;
    left: calc(50% - 6px);
    top: 0;
    width: 8px;
    height: 5px;
    transform: rotate(180deg);
}

tbody::before {
    content: "";
    display: block;
    height: 4px;
}

td {
    height: 21px;
    padding: 0 0 0 7px;
    line-height: 21px;
    color: #6d6d6d;
    white-space: nowrap;
}

td:first-child {
    padding-left: 6px;
    color: #111;
}

td svg {
    width: 14px;
    height: 16px;
    margin-right: 4px;
    vertical-align: -3px;
}

tr.selected {
    background: #cce8ff;
    outline: 1px solid #99d1ff;
    outline-offset: -1px;
}

.vscroll,
.hscroll {
    display: flex;
    background: #f0f0f0;
    color: #444;
}

.vscroll {
    flex-direction: column;
}

.vscroll button {
    height: 17px;
}

.vscroll .thumb {
    height: 36px;
    margin-bottom: auto;
    background: #cdcdcd;
}

.hscroll .thumb {
    flex: 1;
    margin-right: 18px;
    background: #cdcdcd;
}

.hscroll button {
    width: 17px;
}

.vscroll svg,
.hscroll svg {
    width: 9px;
    height: 6px;
}

.flip svg { transform: rotate(180deg); }
.left svg { transform: rotate(90deg); }
.right svg { transform: rotate(-90deg); }

/* Status bars */
.status {
    display: flex;
    align-items: center;
    height: 24px;
    padding-left: 14px;
    gap: 21px;
    font-size: 11px;
    color: #333f52;
}

.views {
    display: flex;
    align-self: stretch;
    margin-left: auto;
    padding-right: 5px;
}

.views button {
    width: 22px;
}

.views .on {
    background: #cdeaf7;
    border: 1px solid #3a9fd0;
}

.views svg {
    width: 18px;
    height: 14px;
    fill: none;
    stroke: #6b7f8c;
}

.views .ic-pics {
    width: 14px;
    height: 11px;
    stroke: none;
}

.classic {
    display: flex;
    align-items: center;
    height: 24px;
    background: #f0f0f0;
    border-top: 1px solid #d7d7d7;
    font-size: 11px;
}

.created {
    flex: 1;
    padding-left: 2px;
}

.blank {
    width: 89px;
    height: 21px;
    border: 1px solid #d7d7d7;
    border-width: 0 1px;
}

.zone {
    display: flex;
    align-items: center;
    gap: 4px;
    width: 141px;
    padding-left: 4px;
    font-size: 12px;
}

.ic-monitor {
    width: 16px;
    height: 16px;
}

.grip {
    align-self: flex-end;
    width: 9px;
    height: 9px;
    margin: 0 2px 2px 0;
    fill: #bbb;
}

/* Taskbar */
.taskbar {
    display: flex;
    height: 40px;
    background: linear-gradient(90deg, #03151f, #04131d 50%, #050d1e);
    color: #fff;
}

.taskbar button {
    width: 49px;
}

.taskbar svg {
    width: 24px;
    height: 24px;
}

.taskbar .start {
    width: 56px;
}

.taskbar .start svg {
    width: 36px;
    height: 36px;
}

.taskbar .running {
    background: #37464f;
    border-bottom: 2px solid #76b9ed;
}

.taskbar .settings svg {
    width: 18px;
    height: 18px;
}

.tray {
    display: flex;
    margin-left: auto;
    padding-right: 4px;
}

.taskbar .tray button {
    width: 24px;
}

.taskbar .tray svg {
    width: 17px;
    height: 16px;
}

.taskbar .tray .weather {
    width: auto;
    gap: 8px;
    margin-right: 10px;
    font-size: 13px;
}

.taskbar .tray .weather svg {
    width: 22px;
    height: 22px;
}

.taskbar .tray .hidden-icons svg {
    width: 12px;
    height: 8px;
    transform: rotate(180deg);
}

.taskbar .tray .clock {
    width: 61px;
    padding-left: 5px;
    font-size: 11px;
    line-height: 18px;
}

.taskbar .tray .notes {
    width: 53px;
    padding-right: 4px;
    border-right: 1px solid #58626c;
}
```
